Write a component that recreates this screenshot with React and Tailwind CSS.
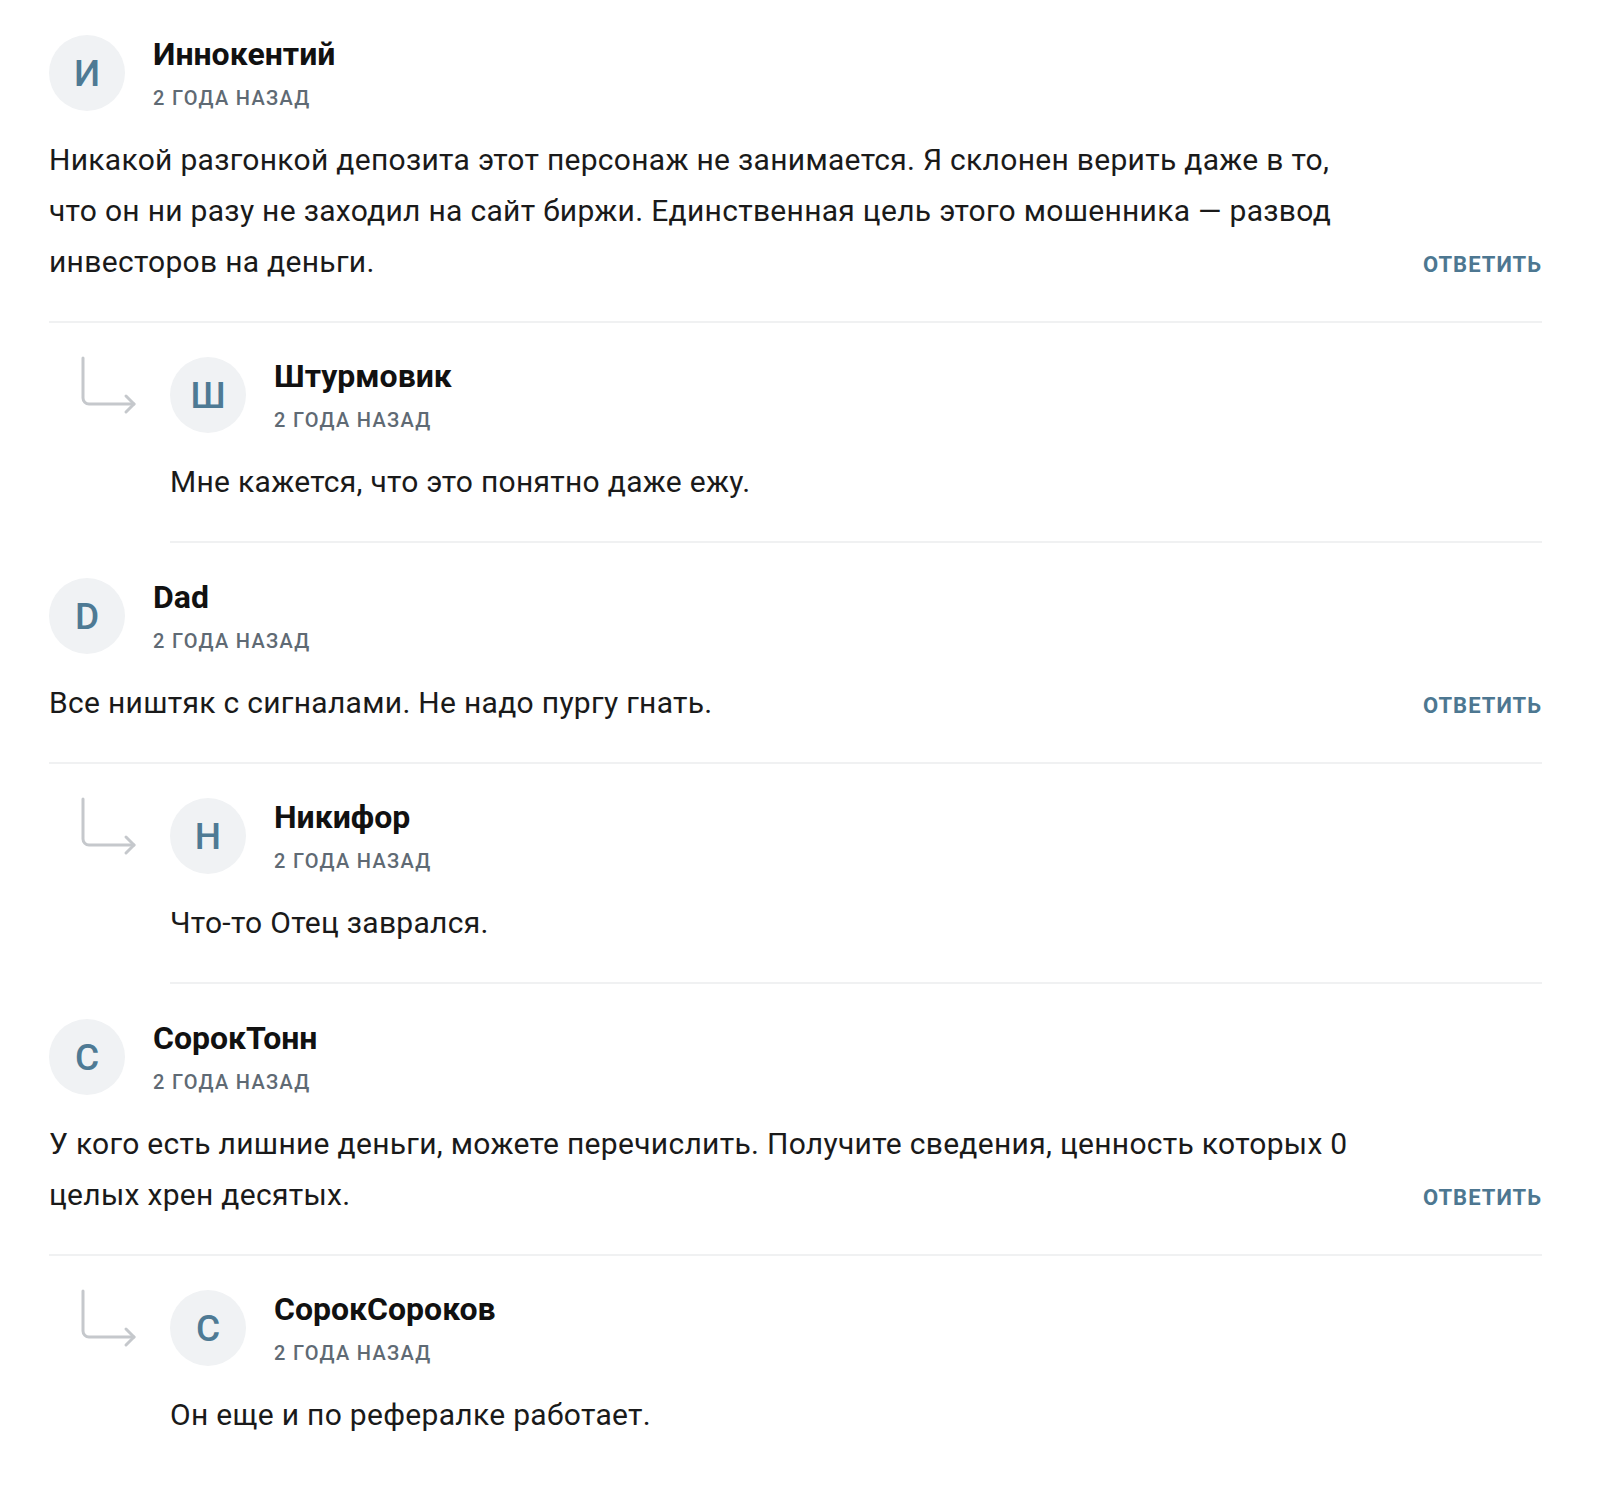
const COMMENTS = [
  {
    name: 'Иннокентий',
    letter: 'И',
    text: 'Никакой разгонкой депозита этот персонаж не занимается. Я склонен верить даже в то, что он ни разу не заходил на сайт биржи. Единственная цель этого мошенника — развод инвесторов на деньги.',
    reply: { name: 'Штурмовик', letter: 'Ш', text: 'Мне кажется, что это понятно даже ежу.' },
  },
  {
    name: 'Dad',
    letter: 'D',
    text: 'Все ништяк с сигналами. Не надо пургу гнать.',
    reply: { name: 'Никифор', letter: 'Н', text: 'Что-то Отец заврался.' },
  },
  {
    name: 'СорокТонн',
    letter: 'С',
    text: 'У кого есть лишние деньги, можете перечислить. Получите сведения, ценность которых 0 целых хрен десятых.',
    reply: { name: 'СорокСороков', letter: 'С', text: 'Он еще и по рефералке работает.' },
  },
]

function Avatar({ letter }) {
  return (
    <div className="w-[76px] h-[76px] shrink-0 rounded-full bg-[#f0f2f4] flex items-center justify-center text-[#4e7a94] text-[37px] font-medium leading-none">
      {letter}
    </div>
  )
}

function Header({ name, letter }) {
  return (
    <div className="flex items-start gap-[28px]">
      <Avatar letter={letter} />
      <div className="flex flex-col">
        <span className="text-[32px] leading-[38px] font-bold text-[#111]">{name}</span>
        <span className="mt-[11px] text-[20px] leading-[28px] font-medium uppercase tracking-[1.3px] text-[#5f6a74]">2 года назад</span>
      </div>
    </div>
  )
}

function ReplyArrow() {
  return (
    <svg className="w-[60px] h-[60px] shrink-0" viewBox="0 0 60 60" fill="none" stroke="#c5c8cc" strokeWidth="3" strokeLinecap="round" strokeLinejoin="round">
      <path d="M4 2v40a6 6 0 0 0 6 6h45" />
      <path d="M47 40l8 8-8 8" />
    </svg>
  )
}

export default function App() {
  return (
    <div className="w-[1600px] min-h-[1505px] bg-white pl-[49px] pr-[58px] pb-[60px]" style={{ fontFamily: 'Roboto, "Noto Sans", sans-serif' }}>
      {COMMENTS.map((c, i) => (
        <div key={i}>
          {/* Top-level comment */}
          <div className="pt-[35px] pb-[34px] border-b-2 border-[#f0f1f2]">
            <Header name={c.name} letter={c.letter} />
            <div className="mt-[22px] flex items-end justify-between">
              <p className="max-w-[1312px] text-[30px] leading-[51px] tracking-[0.3px] text-[#1a1a1a]">{c.text}</p>
              <button className="mb-[8px] text-[22px] leading-[28px] font-bold uppercase tracking-[1px] text-[#4d7791]">Ответить</button>
            </div>
          </div>

          {/* Reply */}
          <div className="flex">
            <div className="w-[121px] shrink-0 pt-[33px] pl-[30px]">
              <ReplyArrow />
            </div>
            <div className={`flex-1 pt-[34px] pb-[34px] ${i < COMMENTS.length - 1 ? 'border-b-2 border-[#f0f1f2]' : ''}`}>
              <Header name={c.reply.name} letter={c.reply.letter} />
              <p className="mt-[22px] text-[30px] leading-[51px] tracking-[0.3px] text-[#1a1a1a]">{c.reply.text}</p>
            </div>
          </div>
        </div>
      ))}
    </div>
  )
}
